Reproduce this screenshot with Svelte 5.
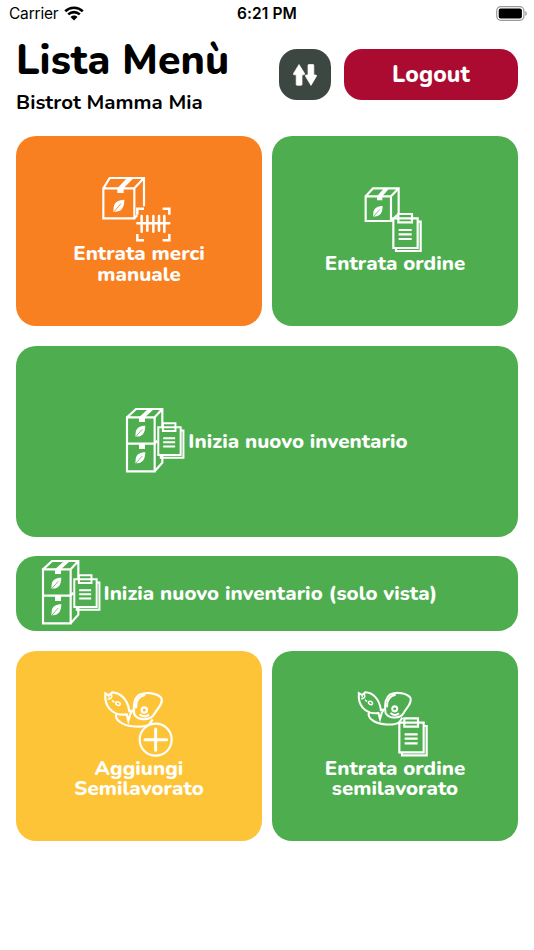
<script>
  const top = [
    { icon: 'scan', color: '#f98020', lines: ['Entrata merci', 'manuale'] },
    { icon: 'order', color: '#4eae4f', lines: ['Entrata ordine'] }
  ];
  const bottom = [
    { icon: 'foodAdd', color: '#fec438', lines: ['Aggiungi', 'Semilavorato'] },
    { icon: 'foodOrder', color: '#4eae4f', lines: ['Entrata ordine', 'semilavorato'] }
  ];
</script>

{#snippet leaf(x, y, s = 1)}
  <g transform="translate({x} {y}) scale({s})">
    <path class="solid" d="M32 0 C14 0 1 8 0 24 L-1 36 L5 36 C22 36 32 25 32 0Z" />
    <path class="vein" d="M1 36 L22 12" />
  </g>
{/snippet}

{#snippet clipboard(x, y, bg)}
  <g transform="translate({x} {y})">
    <path d="M10 103 V111 H84 V23 H75" />
    <path d="M2 13 H75 V102 H2Z" fill={bg} />
    <path d="M17 0 H58 V25 H17Z M17 13 H58" fill={bg} />
    <path d="M18 48 H57 M18 61 H57 M18 75 H57" />
  </g>
{/snippet}

{#snippet food()}
  <path d="M66 100 C60 107 63 118 75 126 C95 142 145 144 163 133 L173 118" />
  <path d="M31 40 L42 46 L52 37 C75 38 98 56 103 94 L113 92 L106 102 L100 122 L95 103 C62 109 34 88 31 56Z" />
  <path class="fine" d="M38 58 C50 57 53 51 49 43 M51 61 L58 67" />
  <ellipse class="fine" cx="69" cy="71" rx="7" ry="5" transform="rotate(25 69 71)" />
  <circle class="dot" cx="42" cy="51" r="2.5" />
  <path d="M118 103 C114 75 119 53 133 44 C157 34 187 40 199 54 C206 70 188 85 177 103 C169 119 132 126 118 103Z" />
  <path d="M123 85 C122 63 131 48 151 45" />
  <circle cx="148" cy="90" r="8" />
  <path d="M134 103 C144 111 154 111 162 104" />
{/snippet}

{#snippet icon(name, color)}
  {#if name === 'scan'}
    <svg class="icon" viewBox="39 39 216 195" style:--bg={color}>
      <path d="M40 70 H133 V160 H40Z L59 39 H162 V124 M133 70 L162 39 M133 160 L142 151" />
      <path class="tape" d="M111 39 H131 L101 70 V84 H82 V70Z" />
      {@render leaf(71, 104)}
      <path class="thick" d="M142 149 V131 H162 M218 131 H238 V149 M238 207 V226 H218 M162 226 H142 V207" />
      <path class="thick round" d="M142 175 H238 M155 153 V200 M172 153 V197 M190 153 V200 M207 153 V197 M223 153 V200" />
    </svg>
  {:else if name === 'order'}
    <svg class="icon" viewBox="27 39 216 195" style:--bg={color}>
      <path d="M47 64 H123 V138 H47Z L69 40 H146 V116 L123 138 M123 64 L146 40" />
      <path class="tape" d="M102 40 H118 L97 64 V76 H81 V64Z" />
      {@render leaf(70, 93, 0.87)}
      {@render clipboard(128, 117, color)}
    </svg>
  {:else if name === 'inventory'}
    <svg class="icon narrow" viewBox="33 27 186 195" style:--bg={color}>
      <path d="M36 52 H119 V214 H36Z L63 27 H142 V188 L119 214 M119 52 L142 27 M36 131 H119 L127 122" />
      <path class="tape" d="M99 27 H117 L90 52 V66 H72 V52Z" />
      <path class="tape" d="M72 131 H90 V147 H72Z" />
      {@render leaf(62, 77, 0.9)}
      {@render leaf(62, 157, 0.9)}
      <g transform="translate(128 70) scale(.92 .93)">
        {@render clipboard(0, 0, color)}
      </g>
    </svg>
  {:else if name === 'foodAdd'}
    <svg class="icon" viewBox="24 39 216 195" style:--bg={color}>
      {@render food()}
      <circle cx="182" cy="179" r="48" fill={color} />
      <path class="plus" d="M150 179 H215 M182 147 V211" />
    </svg>
  {:else}
    <svg class="icon" viewBox="27 39 216 195" style:--bg={color}>
      <g transform="translate(-2 2) scale(.92 .94)">{@render food()}</g>
      {@render clipboard(146, 115, color)}
    </svg>
  {/if}
{/snippet}

{#snippet card(item)}
  <button class="card" style:background={item.color}>
    {@render icon(item.icon, item.color)}
    {#each item.lines as line}<span>{line}</span>{/each}
  </button>
{/snippet}

<div class="screen">
  <div class="status">
    <div class="carrier">
      Carrier
      <svg width="20" height="15" viewBox="0 0 20 15">
        <path d="M1.2 5.2 C6.3 .5 13.7 .5 18.8 5.2 M4.2 8.4 C7.6 5.3 12.4 5.3 15.8 8.4" fill="none" stroke="#000" stroke-width="2.6" />
        <path d="M6.5 11 C8.6 9.1 11.4 9.1 13.5 11 L10 14.5Z" />
      </svg>
    </div>
    <time>6:21 PM</time>
    <svg class="battery" width="31" height="15" viewBox="0 0 31 15">
      <rect x=".7" y=".7" width="27.2" height="13.6" rx="4" fill="none" stroke="#999" stroke-width="1.2" />
      <rect x="2.7" y="2.5" width="23.2" height="10" rx="2" />
      <path d="M29.3 5 C31.3 6 31.3 9 29.3 10Z" fill="#999" />
    </svg>
  </div>

  <header>
    <div class="titles">
      <h1>Lista Menù</h1>
      <p>Bistrot Mamma Mia</p>
    </div>
    <button class="sort" aria-label="Ordina">
      <svg width="24" height="22" viewBox="0 0 24 22">
        <path d="M6 .5 L11.6 9.5 Q12 10.8 10.8 10.8 H9 V20.5 Q9 21.3 8.2 21.3 H4 Q3.2 21.3 3.2 20.5 V10.8 H1.2 Q0 10.8 .5 9.5Z M18 21.4 L23.4 12.3 Q24 11 22.7 11 H20.8 V1.3 Q20.8 .5 20 .5 H15.8 Q15 .5 15 1.3 V11 H13.2 Q11.9 11 12.5 12.3Z" fill="#fff" stroke="#fff" stroke-width=".7" />
      </svg>
    </button>
    <button class="logout">Logout</button>
  </header>

  <main>
    <div class="pair">
      {#each top as item}{@render card(item)}{/each}
    </div>
    <button class="card wide">
      {@render icon('inventory', '#4eae4f')}
      <span>Inizia nuovo inventario</span>
    </button>
    <button class="card wide slim">
      {@render icon('inventory', '#4eae4f')}
      <span>Inizia nuovo inventario (solo vista)</span>
    </button>
    <div class="pair">
      {#each bottom as item}{@render card(item)}{/each}
    </div>
  </main>
</div>

<style>
  :global(body) { background: #fff; }
  .screen {
    box-sizing: border-box;
    width: 534px;
    height: 950px;
    overflow: hidden;
    font-family: Nunito, "Open Sans", sans-serif;
    color: #000;
  }
  .status {
    display: grid;
    grid-template-columns: 1fr auto 1fr;
    align-items: center;
    height: 27px;
    padding: 0 7px 0 9px;
    font: 400 15.5px Inter, sans-serif;
  }
  .carrier { display: flex; align-items: center; gap: 6px; letter-spacing: -0.2px; }
  .status time { font-weight: 600; letter-spacing: 0.1px; margin-left: -2px; }
  .battery { justify-self: end; }
  header {
    display: flex;
    align-items: flex-start;
    padding: 22px 16px 0;
    height: 86.7px;
  }
  .titles { flex: 1; margin-top: -15px; }
  h1, p { margin: 0; white-space: nowrap; }
  h1 { font-size: 41px; line-height: 54px; font-weight: 800; letter-spacing: 0.1px; }
  p { font-size: 20.5px; line-height: 28px; font-weight: 700; letter-spacing: 0.04px; }
  button {
    border: 0;
    padding: 0;
    font-family: inherit;
    color: #fff;
    display: flex;
    align-items: center;
    justify-content: center;
  }
  .sort { width: 52px; height: 51.4px; border-radius: 18px; background: #3d4742; margin-right: 13px; }
  .logout { width: 174px; height: 51.4px; border-radius: 18px; background: #ab0b30; font-size: 23px; font-weight: 800; letter-spacing: 0.1px; }
  main { display: flex; flex-direction: column; gap: 19.5px; padding: 0 16px; }
  .pair { display: grid; grid-template-columns: 1fr 1fr; gap: 10px; }
  .card {
    flex-direction: column;
    height: 190.7px;
    border-radius: 20px;
    background: #4eae4f;
    font-size: 20.5px;
    font-weight: 800;
    line-height: 20.5px;
    letter-spacing: 0.04px;
    white-space: nowrap;
  }
  .wide { flex-direction: row; }
  .slim { height: 75px; justify-content: flex-start; padding-left: 25.5px; }
  .icon {
    width: 72px;
    height: 65px;
    flex: none;
    overflow: visible;
    fill: none;
    stroke: #fff;
    stroke-width: 6.5;
  }
  .narrow { width: 62px; }
  .solid, .tape { fill: #fff; stroke: none; }
  .vein { stroke: var(--bg); stroke-width: 2.5; }
  .fine { stroke-width: 4.5; }
  .thick { stroke-width: 7.5; }
  .round { stroke-linecap: round; }
  .plus { stroke-width: 9; stroke-linecap: round; }
  .dot { fill: #fff; stroke: none; }
</style>
